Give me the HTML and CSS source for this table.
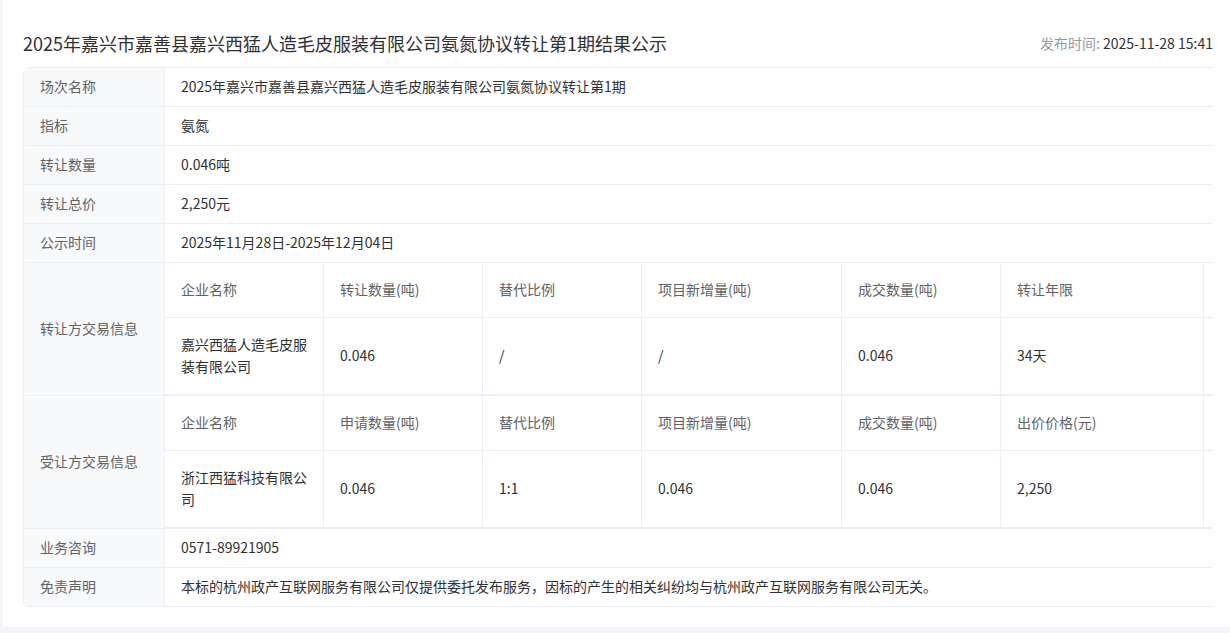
FILE: index.html
```html
<!DOCTYPE html>
<html lang="zh-CN">
<head>
<meta charset="utf-8">
<title>结果公示</title>
<link rel="stylesheet" href="styles.css">
</head>
<body>
<div class="page">
  <div class="header">
    <h1 class="title">2025年嘉兴市嘉善县嘉兴西猛人造毛皮服装有限公司氨氮协议转让第1期结果公示</h1>
    <div class="pubtime"><span class="pub-label">发布时间:</span> <span class="pub-value">2025-11-28 15:41</span></div>
  </div>
  <div class="info-wrap">
    <div class="info">
      <div class="row"><div class="label">场次名称</div><div class="value">2025年嘉兴市嘉善县嘉兴西猛人造毛皮服装有限公司氨氮协议转让第1期</div></div>
      <div class="row"><div class="label">指标</div><div class="value">氨氮</div></div>
      <div class="row"><div class="label">转让数量</div><div class="value">0.046吨</div></div>
      <div class="row"><div class="label">转让总价</div><div class="value">2,250元</div></div>
      <div class="row"><div class="label">公示时间</div><div class="value">2025年11月28日-2025年12月04日</div></div>
      <div class="row group">
        <div class="label">转让方交易信息</div>
        <div class="sub">
          <div class="subrow head">
            <div class="c c1">企业名称</div><div class="c c2">转让数量(吨)</div><div class="c c3">替代比例</div><div class="c c4">项目新增量(吨)</div><div class="c c5">成交数量(吨)</div><div class="c c6">转让年限</div><div class="c c7"></div>
          </div>
          <div class="subrow data">
            <div class="c c1">嘉兴西猛人造毛皮服装有限公司</div><div class="c c2">0.046</div><div class="c c3">/</div><div class="c c4">/</div><div class="c c5">0.046</div><div class="c c6">34天</div><div class="c c7"></div>
          </div>
        </div>
      </div>
      <div class="row group">
        <div class="label">受让方交易信息</div>
        <div class="sub">
          <div class="subrow head">
            <div class="c c1">企业名称</div><div class="c c2">申请数量(吨)</div><div class="c c3">替代比例</div><div class="c c4">项目新增量(吨)</div><div class="c c5">成交数量(吨)</div><div class="c c6">出价价格(元)</div><div class="c c7"></div>
          </div>
          <div class="subrow data">
            <div class="c c1">浙江西猛科技有限公司</div><div class="c c2">0.046</div><div class="c c3">1:1</div><div class="c c4">0.046</div><div class="c c5">0.046</div><div class="c c6">2,250</div><div class="c c7"></div>
          </div>
        </div>
      </div>
      <div class="row"><div class="label">业务咨询</div><div class="value">0571-89921905</div></div>
      <div class="row"><div class="label">免责声明</div><div class="value">本标的杭州政产互联网服务有限公司仅提供委托发布服务，因标的产生的相关纠纷均与杭州政产互联网服务有限公司无关。</div></div>
    </div>
  </div>
</div>
</body>
</html>
```

FILE: styles.css
```css
* { box-sizing: border-box; }
html, body { margin: 0; padding: 0; }
body {
  background: #f4f5f9;
  font-family: "Noto Sans CJK SC", "Microsoft YaHei", sans-serif;
  color: #303133;
  font-size: 14px;
}
.page {
  margin-left: 3px;
  height: 627px;
  background: #ffffff;
  padding: 26px 17px 0 20px;
  overflow: hidden;
}
.header {
  height: 34px;
  margin-bottom: 7px;
  display: flex;
  align-items: center;
  justify-content: space-between;
}
.title {
  margin: 0;
  font-size: 18px;
  font-weight: normal;
  line-height: 34px;
  color: #303133;
  white-space: nowrap;
}
.pubtime {
  font-size: 14px;
  line-height: 34px;
  white-space: nowrap;
}
.pub-label { color: #999999; }
.pub-value { color: #303133; }

.info-wrap {
  width: 1190px;
  overflow: hidden;
}
.info {
  width: 1300px;
  border: 1px solid #ebeef5;
  border-radius: 6px;
  overflow: hidden;
}
.row {
  display: flex;
  border-bottom: 1px solid #ebeef5;
}
.row:last-child { border-bottom: none; }
.label {
  flex: 0 0 141px;
  background: #f8f9fb;
  border-right: 1px solid #ebeef5;
  padding: 0 16px 2px;
  color: #606266;
  line-height: 36px;
  white-space: nowrap;
}
.value {
  flex: 1;
  padding: 0 16px 2px;
  line-height: 36px;
  color: #303133;
  white-space: nowrap;
}
.group .label {
  display: flex;
  align-items: center;
}
.sub { flex: 1; }
.subrow {
  display: flex;
  border-bottom: 1px solid #ebeef5;
}
.subrow.head { height: 55px; }
.subrow.data { height: 77px; }
.c {
  border-right: 1px solid #ebeef5;
  padding: 0 16px 2px;
  display: flex;
  align-items: center;
  line-height: 22px;
}
.head .c { color: #606266; }
.data .c { color: #303133; }
.c1 { flex: 0 0 159px; }
.c2 { flex: 0 0 159px; }
.c3 { flex: 0 0 159px; }
.c4 { flex: 0 0 200px; }
.c5 { flex: 0 0 159px; }
.c6 { flex: 0 0 203px; }
.c7 { flex: 1; border-right: none; }
```
